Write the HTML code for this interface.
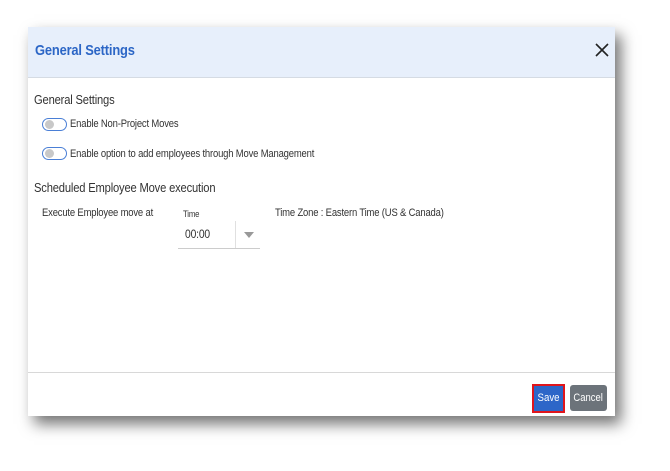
<!DOCTYPE html>
<html><head><style>
body{margin:0;width:670px;height:471px;background:#fff;position:relative;overflow:hidden;font-family:"Liberation Sans",sans-serif;}
.dlg{position:absolute;left:28px;top:27px;width:587px;height:389px;background:#fff;box-shadow:6px 8px 14px rgba(0,0,0,.55);}
.hdr{position:absolute;left:0;top:0;width:587px;height:50px;background:#e7effb;border-bottom:1px solid #d5dbe3;}
.t{position:absolute;white-space:nowrap;letter-spacing:-0.2px;transform:scaleX(0.86);transform-origin:left top;}
.tog{position:absolute;width:23px;height:11px;border:1px solid #4a7fd6;border-radius:7px;background:#fff;}
.tog:after{content:"";position:absolute;left:2px;top:1px;width:9px;height:9px;border-radius:50%;background:#c8c8c8;}
</style></head><body>
<div class="dlg">
<div class="hdr"></div>
<div class="t" style="left:7px;top:15px;font-size:15px;font-weight:bold;color:#2c66c6;">General Settings</div>
<svg style="position:absolute;left:567px;top:16px" width="14" height="14" viewBox="0 0 14 14"><path d="M1 1L13 13M13 1L1 13" stroke="#222" stroke-width="1.6"/></svg>
<div class="t" style="left:6px;top:65px;font-size:13px;color:#333;">General Settings</div>
<div class="tog" style="left:14px;top:91px"></div>
<div class="t" style="left:42px;top:91px;font-size:11px;color:#333;">Enable Non-Project Moves</div>
<div class="tog" style="left:14px;top:120px"></div>
<div class="t" style="left:42px;top:121px;font-size:11px;color:#333;">Enable option to add employees through Move Management</div>
<div class="t" style="left:6px;top:153px;font-size:13px;color:#333;">Scheduled Employee Move execution</div>
<div class="t" style="left:14px;top:180px;font-size:11px;color:#333;">Execute Employee move at</div>
<div class="t" style="left:155px;top:182px;font-size:9px;color:#333;">Time</div>
<div class="t" style="left:157px;top:200px;font-size:12px;color:#333;">00:00</div>
<div style="position:absolute;left:150px;top:221px;width:82px;height:1px;background:#ccc"></div>
<div style="position:absolute;left:207px;top:194px;width:1px;height:27px;background:#e0e0e0"></div>
<div style="position:absolute;left:216px;top:205px;border-left:5px solid transparent;border-right:5px solid transparent;border-top:6px solid #999"></div>
<div class="t" style="left:247px;top:180px;font-size:11px;color:#333;">Time Zone : Eastern Time (US &amp; Canada)</div>
<div style="position:absolute;left:0;top:345px;width:587px;height:1px;background:#d8d8d8"></div>
<div style="position:absolute;left:504px;top:357px;width:29px;height:25px;background:#2d66c8;border:2px solid #e0151c;color:#fff;font-size:11px;text-align:center;line-height:25px;"><span style="display:inline-block;transform:scaleX(0.88)">Save</span></div>
<div style="position:absolute;left:542px;top:358px;width:37px;height:26px;background:#6c737a;border-radius:3px;color:#fff;font-size:11px;text-align:center;line-height:26px;"><span style="display:inline-block;transform:scaleX(0.86)">Cancel</span></div>
</div>
</body></html>
